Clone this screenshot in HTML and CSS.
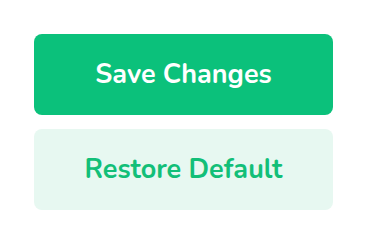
FILE: index.html
```html
<!DOCTYPE html>
<html lang="en">
<head>
  <meta charset="UTF-8">
  <title>Settings actions</title>
  <link rel="stylesheet" href="styles.css">
</head>
<body>
  <div class="actions">
    <button class="btn btn-primary">Save Changes</button>
    <button class="btn btn-secondary">Restore Default</button>
  </div>
</body>
</html>
```
FILE: styles.css
```css
body {
  margin: 0;
  background-color: #fff;
  font-family: "Nunito", Lato, "Noto Sans", sans-serif;
}
.actions {
  display: flex;
  flex-direction: column;
  gap: 14px;
  padding: 34px 35px 0 34px;
}
.btn {
  height: 81px;
  border: none;
  border-radius: 8px;
  font-family: inherit;
  font-size: 27px;
  font-weight: bold;
  cursor: pointer;
}
.btn-primary {
  background-color: #0bc17b;
  color: #fff;
}
.btn-secondary {
  background-color: #e7f8f1;
  color: #12bf78;
}
```
